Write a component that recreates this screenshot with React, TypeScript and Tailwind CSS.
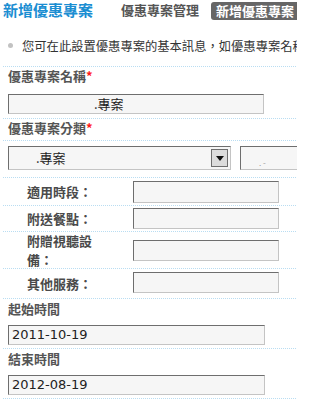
import type { ReactNode } from 'react'

const cjk = { fontFamily: '"Noto Sans CJK TC", "Noto Sans CJK SC", sans-serif' }
const latin = { fontFamily: '"DejaVu Sans", "Noto Sans CJK TC", sans-serif' }

function Field({ className, children }: { className: string; children?: ReactNode }) {
  return (
    <div
      className={`box-border border border-t-[#6e6e6e] border-l-[#6e6e6e] border-r-[#c4c4c4] border-b-[#c4c4c4] bg-[#f6f6f6] flex items-center ${className}`}
    >
      {children}
    </div>
  )
}

function SubRow({ label, h, top, ih }: { label: string; h: string; top: string; ih: string }) {
  return (
    <div className={`box-border flex border-b border-dotted border-[#b9ddf2] ${h}`}>
      <div className="w-[105px] pl-[24px] flex items-center">
        <span className="w-[70px] text-[13px] leading-[19px] font-bold text-[#4a4a4a]">{label}</span>
      </div>
      <div className="pl-[25px]">
        <Field className={`w-[146px] ${ih} ${top}`} />
      </div>
    </div>
  )
}

export default function App() {
  return (
    <div className="w-[297px] h-[402px] overflow-hidden bg-white" style={cjk}>
      <div className="w-[340px]">
        <div className="flex items-center h-[20px]">
          <span className="ml-[3px] text-[15px] leading-[20px] font-bold text-[#1b8ed2]">新增優惠專案</span>
          <span className="ml-[28px] text-[13px] leading-[20px] font-bold text-[#555]">優惠專案管理</span>
          <span className="ml-[12px] h-[18px] mt-[1px] rounded-l-[3px] bg-[#666] pl-[5px] pr-[10px] text-[13px] leading-[18px] font-bold text-white">
            新增優惠專案
          </span>
        </div>

        <div className="ml-[3px] box-border h-[47px] pt-[17px] border-b border-dotted border-[#b9ddf2] flex items-start">
          <span className="mt-[6px] ml-[5px] w-[5px] h-[5px] rounded-full bg-[#c2c2c2]" />
          <span className="ml-[9px] text-[12.3px] leading-[18px] text-[#333] whitespace-nowrap">
            您可在此設置優惠專案的基本訊息，如優惠專案名稱
          </span>
        </div>

        <div className="ml-[3px] box-border h-[52px] pl-[5px] border-b border-dotted border-[#b9ddf2]">
          <div className="text-[13px] leading-[18px] font-bold text-[#555]">
            優惠專案名稱<span className="text-[#ff1a1a]">*</span>
          </div>
          <Field className="mt-[9px] w-[256px] h-[20px]">
            <span className="ml-[85px] text-[13px] text-[#222]">.專案</span>
          </Field>
        </div>

        <div className="ml-[3px] box-border h-[22px] pl-[5px] border-b border-dotted border-[#b9ddf2]">
          <div className="text-[13px] leading-[18px] font-bold text-[#555]">
            優惠專案分類<span className="text-[#ff1a1a]">*</span>
          </div>
        </div>

        <div className="ml-[3px] box-border h-[37px] pl-[5px] pt-[5px] border-b border-dotted border-[#b9ddf2] flex gap-[9px]">
          <Field className="w-[223px] h-[24px] justify-between">
            <span className="ml-[27px] text-[13px] text-[#222]">.專案</span>
            <span className="mr-[2px] w-[17px] h-[18px] box-border border border-[#6e6e6e] bg-[#dcdcdc] flex items-center justify-center">
              <svg width="8" height="5" viewBox="0 0 8 5">
                <path d="M0 0 H8 L4 5 Z" fill="#111" />
              </svg>
            </span>
          </Field>
          <Field className="w-[80px] h-[24px]">
            <span className="ml-[18px] mt-[10px] text-[8px] text-[#999]">. -</span>
          </Field>
        </div>

        <div className="ml-[3px]">
          <SubRow label="適用時段：" h="h-[28px]" top="mt-[3px]" ih="h-[22px]" />
          <SubRow label="附送餐點：" h="h-[26px]" top="mt-[2px]" ih="h-[21px]" />
          <SubRow label="附贈視聽設備：" h="h-[37px]" top="mt-[8px]" ih="h-[21px]" />
          <SubRow label="其他服務：" h="h-[30px]" top="mt-[3px]" ih="h-[21px]" />
        </div>

        {[
          ['起始時間', '2011-10-19'],
          ['結束時間', '2012-08-19'],
        ].map(([label, date]) => (
          <div key={label} className="ml-[3px] box-border h-[50px] pl-[5px] pt-[1px] border-b border-dotted border-[#b9ddf2]">
            <div className="text-[13px] leading-[18px] font-bold text-[#555]">{label}</div>
            <Field className="mt-[7px] w-[257px] h-[20px]">
              <span className="ml-[3px] text-[13px] text-[#222]" style={latin}>
                {date}
              </span>
            </Field>
          </div>
        ))}
      </div>
    </div>
  )
}
